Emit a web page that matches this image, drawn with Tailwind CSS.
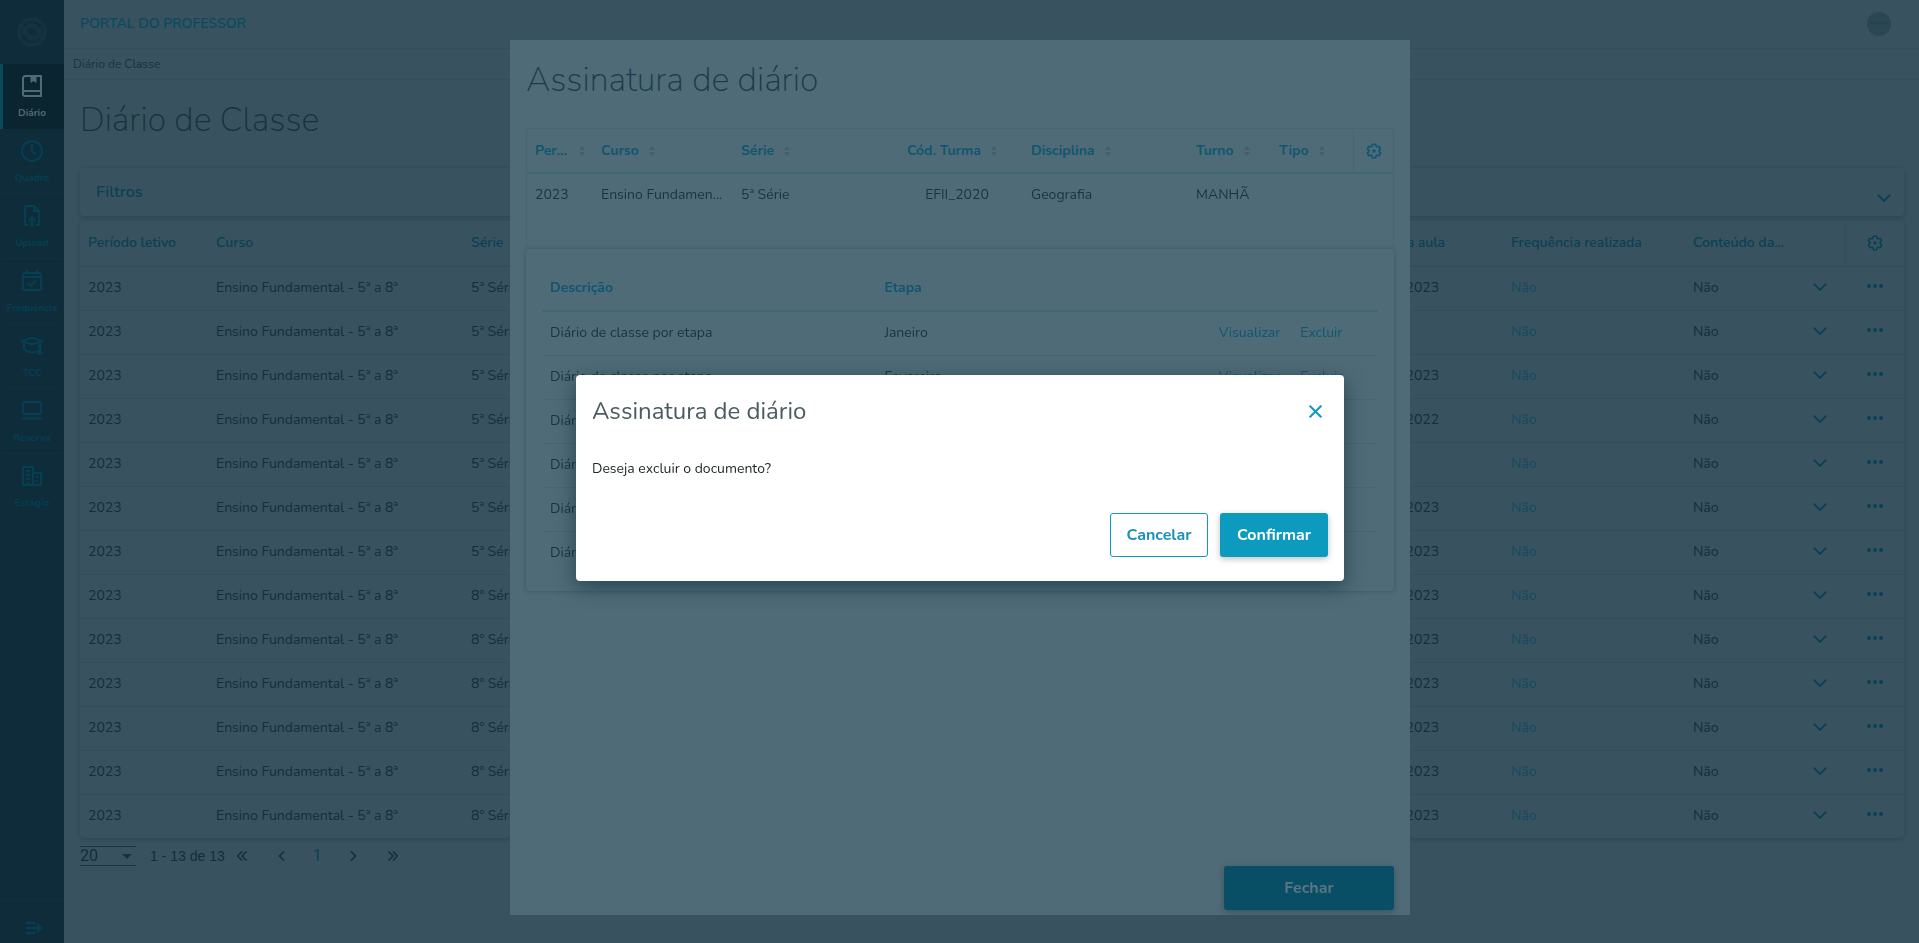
<!DOCTYPE html>
<html lang="pt-BR">
<head>
    <meta charset="UTF-8">
    <meta name="viewport" content="width=device-width, initial-scale=1.0">
    <title>Portal do Professor</title>
    <script src="https://cdn.jsdelivr.net/npm/@tailwindcss/browser@4"></script>
</head>
<body class="flex h-screen overflow-hidden bg-[#38535f] font-['Nunito','Open_Sans',sans-serif] text-sm text-[#112f3d]">
    <!-- Símbolos reutilizados -->
    <svg class="hidden">
        <symbol id="gear" viewBox="0 0 24 24" fill="none" stroke="currentColor" stroke-width="2.2" stroke-linejoin="round">
            <path d="M9.594 3.94c.09-.542.56-.94 1.11-.94h2.593c.55 0 1.02.398 1.11.94l.213 1.281c.063.374.313.686.645.87.074.04.147.083.22.127.325.196.72.257 1.075.124l1.217-.456a1.125 1.125 0 0 1 1.37.49l1.296 2.247a1.125 1.125 0 0 1-.26 1.431l-1.003.827c-.293.241-.438.613-.43.992a7.723 7.723 0 0 1 0 .255c-.008.378.137.75.43.991l1.004.827c.424.35.534.955.26 1.43l-1.298 2.247a1.125 1.125 0 0 1-1.369.491l-1.217-.456c-.355-.133-.75-.072-1.076.124a6.47 6.47 0 0 1-.22.128c-.331.183-.581.495-.644.869l-.213 1.281c-.09.543-.56.94-1.11.94h-2.594c-.55 0-1.019-.398-1.11-.94l-.213-1.281c-.062-.374-.312-.686-.644-.87a6.52 6.52 0 0 1-.22-.127c-.325-.196-.72-.257-1.076-.124l-1.217.456a1.125 1.125 0 0 1-1.369-.49l-1.297-2.247a1.125 1.125 0 0 1 .26-1.431l1.004-.827c.292-.24.437-.613.43-.991a6.932 6.932 0 0 1 0-.255c.007-.38-.138-.751-.43-.992l-1.004-.827a1.125 1.125 0 0 1-.26-1.43l1.297-2.247a1.125 1.125 0 0 1 1.37-.491l1.216.456c.356.133.751.072 1.076-.124.072-.044.146-.086.22-.128.332-.183.582-.495.644-.869l.214-1.28Z"/>
            <circle cx="12" cy="12" r="2.2" fill="currentColor" stroke="none"/>
        </symbol>
        <symbol id="chevron" viewBox="0 0 14 8" fill="none" stroke="currentColor" stroke-width="1.8">
            <path d="M.7.7 7 7 13.3.7"/>
        </symbol>
        <symbol id="dots" viewBox="0 0 16 4" fill="currentColor">
            <circle cx="2" cy="2" r="2"/><circle cx="8" cy="2" r="2"/><circle cx="14" cy="2" r="2"/>
        </symbol>
        <symbol id="sort" viewBox="0 0 6 10" fill="currentColor">
            <path d="M0 4 3 0l3 4zM0 6h6L3 10z"/>
        </symbol>
    </svg>

    <!-- Menu lateral -->
    <aside class="flex w-16 shrink-0 flex-col bg-[#0e2c3a] text-[10px] leading-4 font-bold text-[#053f54]">
        <div class="flex h-16 items-center justify-center">
            <svg class="size-[30px]" viewBox="0 0 30 30">
                <circle cx="15" cy="15" r="13" fill="none" stroke="#153240" stroke-width="3.500"/>
                <path d="M10 5 20.500 7.500V10L25 11V21l-5 1v3L10 22.500V19L5 17.500V9h5zM10.500 10.500v6l9 3v-6z" fill="#153240" fill-rule="evenodd"/>
            </svg>
        </div>
        <nav class="flex flex-1 flex-col">
            <a href="#" class="flex h-[65px] flex-col items-center border-l-3 border-[#0b4a5c] bg-[#0a2530] pr-[3px] pt-[11px] text-[#4f6b78]">
                <svg class="size-[22px]" viewBox="0 0 22 22" fill="none" stroke="currentColor" stroke-width="2"><path d="M20 1H4.500A2.500 2.500 0 0 0 2 3.500V19a2 2 0 0 0 2 2h16zM2 16h18"/><path d="M9.500 2h6v6l-3-2-3 2z" fill="currentColor" stroke="none"/></svg>
                <span class="mt-2">Diário</span>
            </a>
            <a href="#" class="mx-[3px] flex h-[65px] flex-col items-center border-b border-[#12303f] pt-[11px]">
                <svg class="size-[22px]" viewBox="0 0 22 22" fill="none" stroke="currentColor" stroke-width="2"><circle cx="11" cy="11" r="10"/><path d="M11 4v7l4 4"/></svg>
                <span class="mt-2">Quadro</span>
            </a>
            <a href="#" class="mx-[3px] flex h-[65px] flex-col items-center border-b border-[#12303f] pt-[11px]">
                <svg class="size-[22px]" viewBox="0 0 22 22" fill="none" stroke="currentColor" stroke-width="2"><path d="M7 20H5a1 1 0 0 1-1-1V2a1 1 0 0 1 1-1h8l5 5v13a1 1 0 0 1-1 1h-2M11 22v-9M7.500 16l3.500-3.500L14.500 16M13 1v5h5"/></svg>
                <span class="mt-2">Upload</span>
            </a>
            <a href="#" class="mx-[3px] flex h-[65px] flex-col items-center border-b border-[#12303f] pt-[11px]">
                <svg class="size-[22px]" viewBox="0 0 22 22" fill="none" stroke="currentColor" stroke-width="2"><path d="M3.500 3h15A1.500 1.500 0 0 1 20 4.500v14a1.500 1.500 0 0 1-1.500 1.500h-15A1.500 1.500 0 0 1 2 18.500v-14A1.500 1.500 0 0 1 3.500 3zM2 7h18M6 0v3M16 0v3M6.500 13l3 3 6-6"/></svg>
                <span class="mt-2">Frequência</span>
            </a>
            <a href="#" class="mx-[3px] flex h-[65px] flex-col items-center border-b border-[#12303f] pt-[11px]">
                <svg class="h-[22px] w-6" viewBox="0 0 24 22" fill="none" stroke="currentColor" stroke-width="2"><path d="M2 6 12 2.500 22 6 12 9.500zM4 7.500V14c2 2 5 3.500 8 3.500s4-.5 5-1.500M20 7v5"/><path d="M20 9.500a2 2 0 0 1 1 3.500l1 6.500h-5l1.500-6.500A2 2 0 0 1 20 9.500z" fill="currentColor" stroke="none"/></svg>
                <span class="mt-2">TCC</span>
            </a>
            <a href="#" class="mx-[3px] flex h-[65px] flex-col items-center border-b border-[#12303f] pt-[11px]">
                <svg class="size-[22px]" viewBox="0 0 22 22" fill="none" stroke="currentColor" stroke-width="2"><rect x="2" y="2" width="18" height="12" rx="2"/><path d="M1 18.500h20"/></svg>
                <span class="mt-2">Reserva</span>
            </a>
            <a href="#" class="mx-[3px] flex h-[65px] flex-col items-center pt-[11px]">
                <svg class="size-[22px]" viewBox="0 0 22 22" fill="none" stroke="currentColor" stroke-width="2"><path d="M2 20V2h10v18M12 8h8v12M1 20h20M5 6h4M5 10h4M5 14h4M15 12h2M15 16h2M7 20v-3"/></svg>
                <span class="mt-2">Estágio</span>
            </a>
        </nav>
        <button aria-label="Expandir menu" class="flex h-11 items-center justify-center border-t border-[#12303f] pl-1 pt-3">
            <svg class="h-3 w-4" viewBox="0 0 16 12" fill="none" stroke="currentColor" stroke-width="2"><path d="M0 1h9M0 6h15M0 11h9M11 2l4 4-4 4"/></svg>
        </button>
    </aside>

    <div class="flex min-w-0 flex-1 flex-col">
        <header class="flex h-[49px] items-center justify-between border-b border-[#344f5b] px-4 pr-7">
            <span class="text-sm font-semibold text-[#0b4a5c]">PORTAL DO PROFESSOR</span>
            <span class="flex size-6 items-center justify-center rounded-full bg-[#2b4754] text-[5px] text-[#223e4a]">AVATAR</span>
        </header>
        <div class="flex h-[31px] items-center border-b border-[#344f5b] px-[9px] text-xs text-[#17323e]">Diário de Classe</div>

        <main class="flex flex-1 flex-col px-4 pr-[15px]">
            <h1 class="mt-4 text-[34px] leading-12 font-extralight text-[#17323e]">Diário de Classe</h1>

            <section class="mt-6 flex h-12 items-center justify-between rounded-sm px-4 pr-[13px] text-[#0a4056] shadow-[0_1px_4px_rgba(14,44,58,0.35)]">
                <h2 class="text-base font-semibold">Filtros</h2>
                <button aria-label="Abrir filtros" class="pt-3"><svg class="h-2 w-3.5"><use href="#chevron"/></svg></button>
            </section>

            <div class="mt-[5px] rounded-sm shadow-[0_1px_4px_rgba(14,44,58,0.35)]">
                <table class="w-full table-fixed text-left">
                    <colgroup>
                        <col class="w-[128px]"><col class="w-[255px]"><col class="w-[160px]"><col class="w-[240px]"><col>
                        <col class="w-[147px]"><col class="w-[182px]"><col class="w-[105px]"><col class="w-[55px]"><col class="w-[59px]">
                    </colgroup>
                    <thead>
                        <tr class="h-[45px] border-b-2 border-[#30505e] text-[#0a4056] [&>th]:px-2 [&>th]:font-semibold">
                            <th>Período letivo</th>
                            <th>Curso</th>
                            <th>Série</th>
                            <th>Cód. Turma</th>
                            <th>Disciplina</th>
                            <th>Data da aula</th>
                            <th>Frequência realizada</th>
                            <th class="text-nowrap">Conteúdo da...</th>
                            <th></th>
                            <th class="border-l border-[#334e5a]"><button aria-label="Configurar colunas" class="mx-auto block"><svg class="size-[18px]"><use href="#gear"/></svg></button></th>
                        </tr>
                    </thead>
                    <tbody id="diarios"></tbody>
                </table>
            </div>

            <!-- Paginação -->
            <div class="mt-0.5 flex h-8 items-center font-['Roboto',sans-serif]">
                <div class="relative w-14">
                    <select aria-label="Itens por página" class="h-5 w-full appearance-none border-y border-[#1b3743] text-base leading-4"><option>20</option></select>
                    <svg class="pointer-events-none absolute right-1 top-2 h-[5px] w-2.5" viewBox="0 0 10 5"><path d="M0 0h10L5 5z" fill="#17323e"/></svg>
                </div>
                <span class="ml-3.5 font-['Liberation_Sans',sans-serif] text-sm">1 - 13 de 13</span>
                <div class="ml-3 flex items-center gap-[30px]">
                    <button aria-label="Primeira página"><svg class="size-2.5" viewBox="0 0 10 10" fill="none" stroke="currentColor" stroke-width="1.500"><path d="M5 .5.500 5 5 9.500M9.500.5 5 5l4.500 4.500"/></svg></button>
                    <button aria-label="Página anterior"><svg class="size-2.5" viewBox="0 0 10 10" fill="none" stroke="currentColor" stroke-width="1.500"><path d="M7 .5 2.500 5 7 9.500"/></svg></button>
                    <a href="#" class="-mx-1 text-base text-[#0a4056]">1</a>
                    <button aria-label="Próxima página"><svg class="size-2.5" viewBox="0 0 10 10" fill="none" stroke="currentColor" stroke-width="1.500"><path d="M3 .5 7.500 5 3 9.500"/></svg></button>
                    <button aria-label="Última página"><svg class="size-2.5" viewBox="0 0 10 10" fill="none" stroke="currentColor" stroke-width="1.500"><path d="M5 .5 9.500 5 5 9.500M.5.500 5 5 .5 9.500"/></svg></button>
                </div>
            </div>
        </main>
    </div>

    <!-- Modal de assinatura -->
    <div class="fixed inset-0 flex justify-center pt-10 pb-7 pl-px">
        <section role="dialog" aria-label="Assinatura de diário" class="flex w-[900px] flex-col bg-[#4f6b77] px-4 pb-[5px] text-[#163543]">
            <h2 class="mt-4 text-[34px] leading-12 font-extralight text-[#1b3b49]">Assinatura de diário</h2>

            <div class="mt-6 rounded-t-sm border border-b-0 border-[#496571] pb-[33px]">
                <table class="w-full table-fixed text-left">
                    <colgroup>
                        <col class="w-[66px]"><col class="w-[140px]"><col class="w-[166px]"><col class="w-[124px]">
                        <col class="w-[165px]"><col class="w-[83px]"><col><col class="w-10">
                    </colgroup>
                    <thead>
                        <tr class="h-11 border-b-2 border-[#436676] text-[#0f5670] [&>th]:px-2 [&>th]:font-bold [&>th]:text-nowrap">
                            <th><span class="flex items-center justify-between">Per...<svg class="h-2.5 w-1.5 text-[#435f6b]"><use href="#sort"/></svg></span></th>
                            <th><span class="flex items-center gap-2.5">Curso<svg class="h-2.5 w-1.5 text-[#435f6b]"><use href="#sort"/></svg></span></th>
                            <th><span class="flex items-center gap-2.5">Série<svg class="h-2.5 w-1.5 text-[#435f6b]"><use href="#sort"/></svg></span></th>
                            <th><span class="flex items-center gap-2.5">Cód. Turma<svg class="h-2.5 w-1.5 text-[#435f6b]"><use href="#sort"/></svg></span></th>
                            <th><span class="flex items-center gap-2.5">Disciplina<svg class="h-2.5 w-1.5 text-[#435f6b]"><use href="#sort"/></svg></span></th>
                            <th><span class="flex items-center gap-2.5">Turno<svg class="h-2.5 w-1.5 text-[#435f6b]"><use href="#sort"/></svg></span></th>
                            <th><span class="flex items-center gap-2.5">Tipo<svg class="h-2.5 w-1.5 text-[#435f6b]"><use href="#sort"/></svg></span></th>
                            <th class="border-l border-[#496571]"><button aria-label="Configurar colunas" class="-mx-2 flex w-10 justify-center"><svg class="size-[18px]"><use href="#gear"/></svg></button></th>
                        </tr>
                    </thead>
                    <tbody>
                        <tr class="h-[43px] [&>td]:px-2">
                            <td>2023</td>
                            <td class="text-nowrap">Ensino Fundamen...</td>
                            <td>5ª Série</td>
                            <td><span class="block pr-2 text-center">EFII_2020</span></td>
                            <td>Geografia</td>
                            <td>MANHÃ</td>
                            <td></td>
                            <td></td>
                        </tr>
                    </tbody>
                </table>
            </div>

            <div class="rounded-sm p-4 shadow-[0_0_4px_rgba(22,53,67,0.4)]">
                <table class="w-full table-fixed text-left">
                    <colgroup><col class="w-2/5"><col class="w-2/5"><col></colgroup>
                    <thead>
                        <tr class="h-[46px] border-b-2 border-[#436676] text-[#0f5670] [&>th]:px-2 [&>th]:font-bold">
                            <th>Descrição</th>
                            <th>Etapa</th>
                            <th></th>
                        </tr>
                    </thead>
                    <tbody id="etapas"></tbody>
                </table>
            </div>

            <button class="mt-auto h-11 w-[170px] self-end rounded-[3px] bg-[#084f66] text-base font-bold text-[#5b7683] shadow-[0_2px_6px_rgba(14,44,58,0.35)]">Fechar</button>
        </section>
    </div>

    <!-- Confirmação de exclusão -->
    <div class="fixed inset-0 flex items-center justify-center pt-[13px] pl-px">
        <section role="alertdialog" aria-labelledby="confirma-titulo" class="w-[768px] rounded-sm bg-white p-4 pb-6 shadow-[0_6px_20px_rgba(14,44,58,0.6)]">
            <div class="flex h-10 items-center justify-between pr-[6px]">
                <h2 id="confirma-titulo" class="text-2xl text-[#4a5c60]">Assinatura de diário</h2>
                <button aria-label="Fechar" class="text-[#0c9abe]"><svg class="size-[13px]" viewBox="0 0 12 12" fill="none" stroke="currentColor" stroke-width="1.800"><path d="m.6.600 10.800 10.800M11.400.6.600 11.400"/></svg></button>
            </div>
            <p class="mt-7 leading-5 text-[#1d2426]">Deseja excluir o documento?</p>
            <div class="mt-[34px] flex justify-end gap-3 text-base font-bold">
                <button class="h-11 w-[98px] rounded-[3px] border border-[#0c9abe] text-[#1b8fb5]">Cancelar</button>
                <button class="h-11 w-[108px] rounded-[3px] bg-[#0c9abe] text-white shadow-[0_2px_6px_rgba(0,0,0,0.25)]">Confirmar</button>
            </div>
        </section>
    </div>

    <script>
        const diarios = [
            ['5ª Série', '06/03/2023'], ['5ª Série', ''], ['5ª Série', '06/03/2023'], ['5ª Série', '12/12/2022'],
            ['5ª Série', ''], ['5ª Série', '06/03/2023'], ['5ª Série', '06/03/2023'], ['8º Série', '06/03/2023'],
            ['8º Série', '06/03/2023'], ['8º Série', '06/03/2023'], ['8º Série', '06/03/2023'], ['8º Série', '06/03/2023'],
            ['8º Série', '06/03/2023']
        ];

        document.getElementById('diarios').innerHTML = diarios.map(([serie, aula]) => `
            <tr class="h-11 border-b border-[#334e5a] last:border-0 [&>td]:px-2">
                <td>2023</td>
                <td>Ensino Fundamental - 5ª a 8ª</td>
                <td>${serie}</td>
                <td></td>
                <td></td>
                <td>${aula}</td>
                <td><a href="#" class="text-[#144a5f]">Não</a></td>
                <td>Não</td>
                <td><button aria-label="Expandir linha" class="ml-auto mr-2.5 block pb-0.5 text-[#0a4056]"><svg class="h-2 w-3.5"><use href="#chevron"/></svg></button></td>
                <td><button aria-label="Mais ações" class="mx-auto block pb-1 text-[#0a4056]"><svg class="h-1 w-4"><use href="#dots"/></svg></button></td>
            </tr>`).join('');

        const etapas = ['Janeiro', 'Fevereiro', 'Março', 'Abril', 'Maio', 'Junho'];

        document.getElementById('etapas').innerHTML = etapas.map(etapa => `
            <tr class="h-11 border-b border-[#496571] last:border-0 [&>td]:px-2">
                <td>Diário de classe por etapa</td>
                <td>${etapa}</td>
                <td><span class="flex gap-5 text-[#0f5670]"><a href="#">Visualizar</a><a href="#">Excluir</a></span></td>
            </tr>`).join('');
    </script>
</body>
</html>
